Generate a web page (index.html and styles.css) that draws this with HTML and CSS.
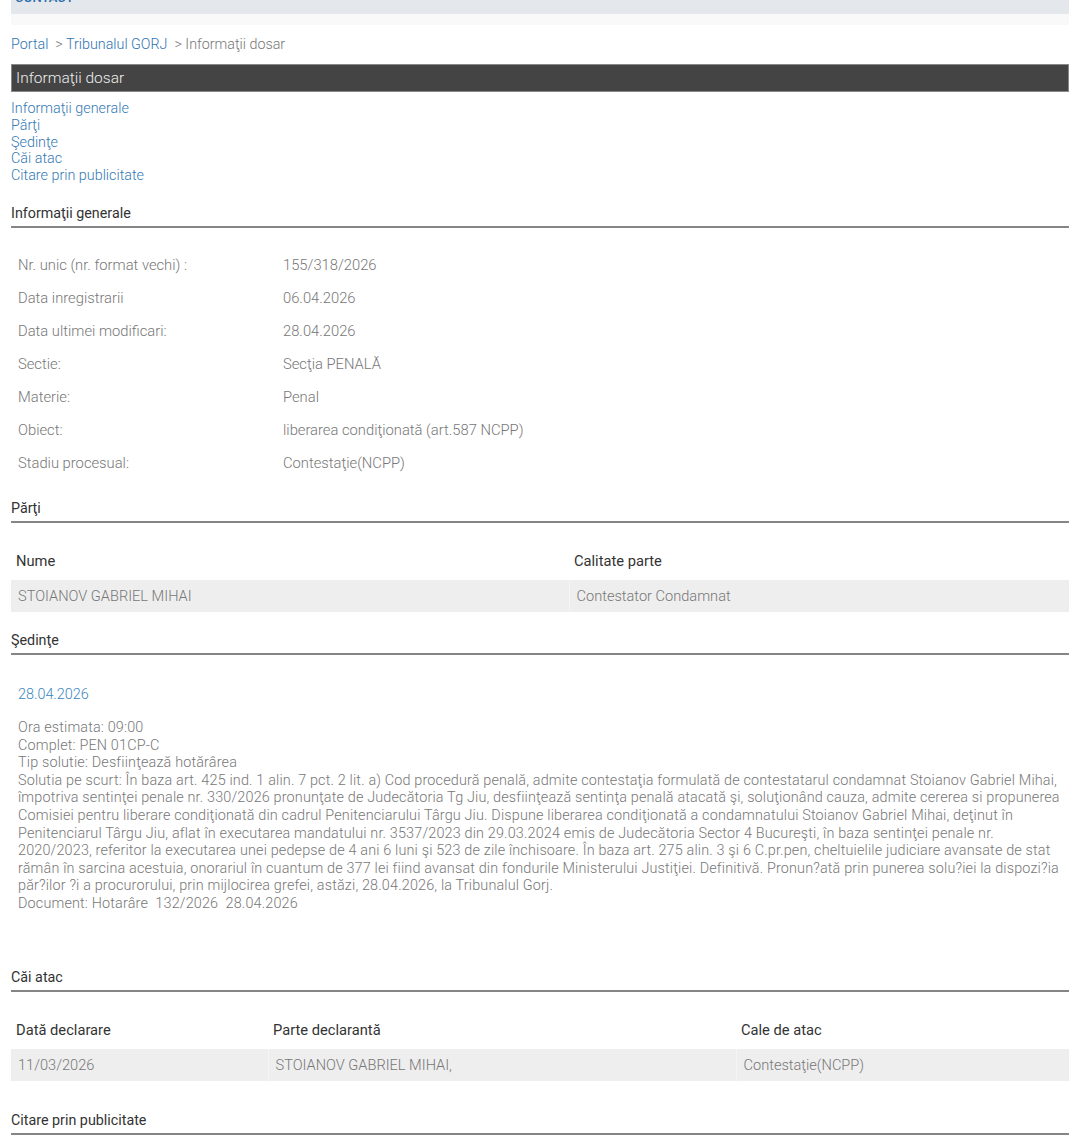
FILE: index.html
```html
<!DOCTYPE html>
<html>
    <head>
        <meta charset="utf-8">
        <title>Informaţii dosar</title>
        <link rel="stylesheet" href="styles.css">
    </head>
    <body>
    <div class="page">
        <div class="topbar"><a href="#">CONTACT</a></div>
        <div class="topshade"></div>

        <div class="crumbs">
            <a href="#">Portal</a>&nbsp; &gt; <a href="#">Tribunalul GORJ</a>&nbsp; &gt; Informaţii dosar
        </div>

        <div class="titlebar">Informaţii dosar</div>

        <ul class="toc">
            <li><a href="#generale">Informaţii generale</a></li>
            <li><a href="#parti">Părţi</a></li>
            <li><a href="#sedinte">Şedinţe</a></li>
            <li><a href="#atac">Căi atac</a></li>
            <li><a href="#citare">Citare prin publicitate</a></li>
        </ul>

        <h2 class="section" id="generale">Informaţii generale</h2>
        <div class="info">
            <div class="info-row"><span>Nr. unic (nr. format vechi) :</span><span>155/318/2026</span></div>
            <div class="info-row"><span>Data inregistrarii</span><span>06.04.2026</span></div>
            <div class="info-row"><span>Data ultimei modificari:</span><span>28.04.2026</span></div>
            <div class="info-row"><span>Sectie:</span><span>Secţia PENALĂ</span></div>
            <div class="info-row"><span>Materie:</span><span>Penal</span></div>
            <div class="info-row"><span>Obiect:</span><span>liberarea condiţionată (art.587 NCPP)</span></div>
            <div class="info-row"><span>Stadiu procesual:</span><span>Contestaţie(NCPP)</span></div>
        </div>

        <h2 class="section" id="parti">Părţi</h2>
        <table class="grid parti">
            <tr><th>Nume</th><th>Calitate parte</th></tr>
            <tr><td>STOIANOV GABRIEL MIHAI</td><td>Contestator Condamnat</td></tr>
        </table>

        <h2 class="section" id="sedinte">Şedinţe</h2>
        <div class="sedinta">
            <div class="sedinta-date">28.04.2026</div>
            <div class="sedinta-text">
                Ora estimata: 09:00<br>
                Complet: PEN 01CP-C<br>
                Tip solutie: Desfiinţează hotărârea<br>
                Solutia pe scurt: În baza art. 425 ind. 1 alin. 7 pct. 2 lit. a) Cod procedură penală, admite contestaţia formulată de contestatarul condamnat Stoianov Gabriel Mihai,<br>
                împotriva sentinţei penale nr. 330/2026 pronunţate de Judecătoria Tg Jiu, desfiinţează sentinţa penală atacată şi, soluţionând cauza, admite cererea si propunerea<br>
                Comisiei pentru liberare condiţionată din cadrul Penitenciarului Târgu Jiu. Dispune liberarea condiţionată a condamnatului Stoianov Gabriel Mihai, deţinut în<br>
                Penitenciarul Târgu Jiu, aflat în executarea mandatului nr. 3537/2023 din 29.03.2024 emis de Judecătoria Sector 4 Bucureşti, în baza sentinţei penale nr.<br>
                2020/2023, referitor la executarea unei pedepse de 4 ani 6 luni şi 523 de zile închisoare. În baza art. 275 alin. 3 şi 6 C.pr.pen, cheltuielile judiciare avansate de stat<br>
                rămân în sarcina acestuia, onorariul în cuantum de 377 lei fiind avansat din fondurile Ministerului Justiţiei. Definitivă. Pronun?ată prin punerea solu?iei la dispozi?ia<br>
                păr?ilor ?i a procurorului, prin mijlocirea grefei, astăzi, 28.04.2026, la Tribunalul Gorj.<br>
                Document: Hotarâre&nbsp; 132/2026&nbsp; 28.04.2026
            </div>
        </div>

        <h2 class="section" id="atac">Căi atac</h2>
        <table class="grid atac">
            <tr><th class="c1">Dată declarare</th><th class="c2">Parte declarantă</th><th>Cale de atac</th></tr>
            <tr><td>11/03/2026</td><td>STOIANOV GABRIEL MIHAI,</td><td>Contestaţie(NCPP)</td></tr>
        </table>

        <h2 class="section" id="citare">Citare prin publicitate</h2>
    </div>
    </body>
</html>
```

FILE: styles.css
```css
body {
  margin: 0;
  background: #fff;
  font-family: Roboto, "Liberation Sans", sans-serif;
  font-weight: 300;
  font-size: 14.3px;
  color: #777;
}

a {
  color: #2f74b3;
  text-decoration: none;
}

.page {
  margin: 0 9px 0 11px;
}

.topbar {
  height: 14px;
  overflow: hidden;
  background-color: #e4e7ec;
  padding-left: 4px;
}

.topbar a {
  display: block;
  margin-top: -10px;
  line-height: 16px;
  font-size: 13px;
  font-weight: 500;
  color: #2b6ea8;
}

.topshade {
  height: 11px;
  background-color: #f9f9f9;
}

.crumbs {
  margin-top: 11px;
  line-height: 17px;
  color: #777;
}

.titlebar {
  margin-top: 11px;
  height: 26px;
  line-height: 26px;
  background-color: #444;
  border: 1px solid #888;
  color: #eee;
  font-size: 15.5px;
  padding-left: 4px;
}

.toc {
  list-style: none;
  margin: 9px 0 0 0;
  padding: 0;
  line-height: 16.8px;
  font-size: 14.35px;
}

.toc a {
  color: #3479b4;
}

.section {
  margin: 20px 0 0 0;
  padding-bottom: 4px;
  border-bottom: 2px solid #858585;
  font-size: 14.3px;
  font-weight: 400;
  line-height: 17px;
  color: #333;
}

.info {
  margin: 21px 0 1px 0;
  font-size: 14.75px;
}

.info-row {
  display: grid;
  grid-template-columns: 265px 1fr;
  height: 33px;
  line-height: 33px;
  padding-left: 7px;
}

.grid {
  margin: 20px 0 1px 0;
  width: 100%;
  border-collapse: collapse;
  font-size: 14.6px;
}

.grid th {
  text-align: left;
  font-weight: 400;
  color: #333;
  font-size: 14.7px;
  height: 37px;
  padding: 0 0 0 5px;
}

.grid td {
  background-color: #eee;
  height: 32px;
  padding: 0 0 0 7px;
}

.grid td + td {
  border-left: 1px solid #f5f5f5;
}

.parti th:first-child {
  width: 553px;
}

.atac {
  margin-bottom: 31px;
}

.atac .c1 {
  width: 252px;
}

.atac .c2 {
  width: 463px;
}

.sedinta {
  padding: 31px 0 36px 7px;
  font-size: 14.4px;
}

.sedinta-date {
  color: #3a86c0;
  line-height: 17px;
}

.sedinta-text {
  margin-top: 16px;
  line-height: 17.6px;
  letter-spacing: 0.16px;
  white-space: nowrap;
}
```
